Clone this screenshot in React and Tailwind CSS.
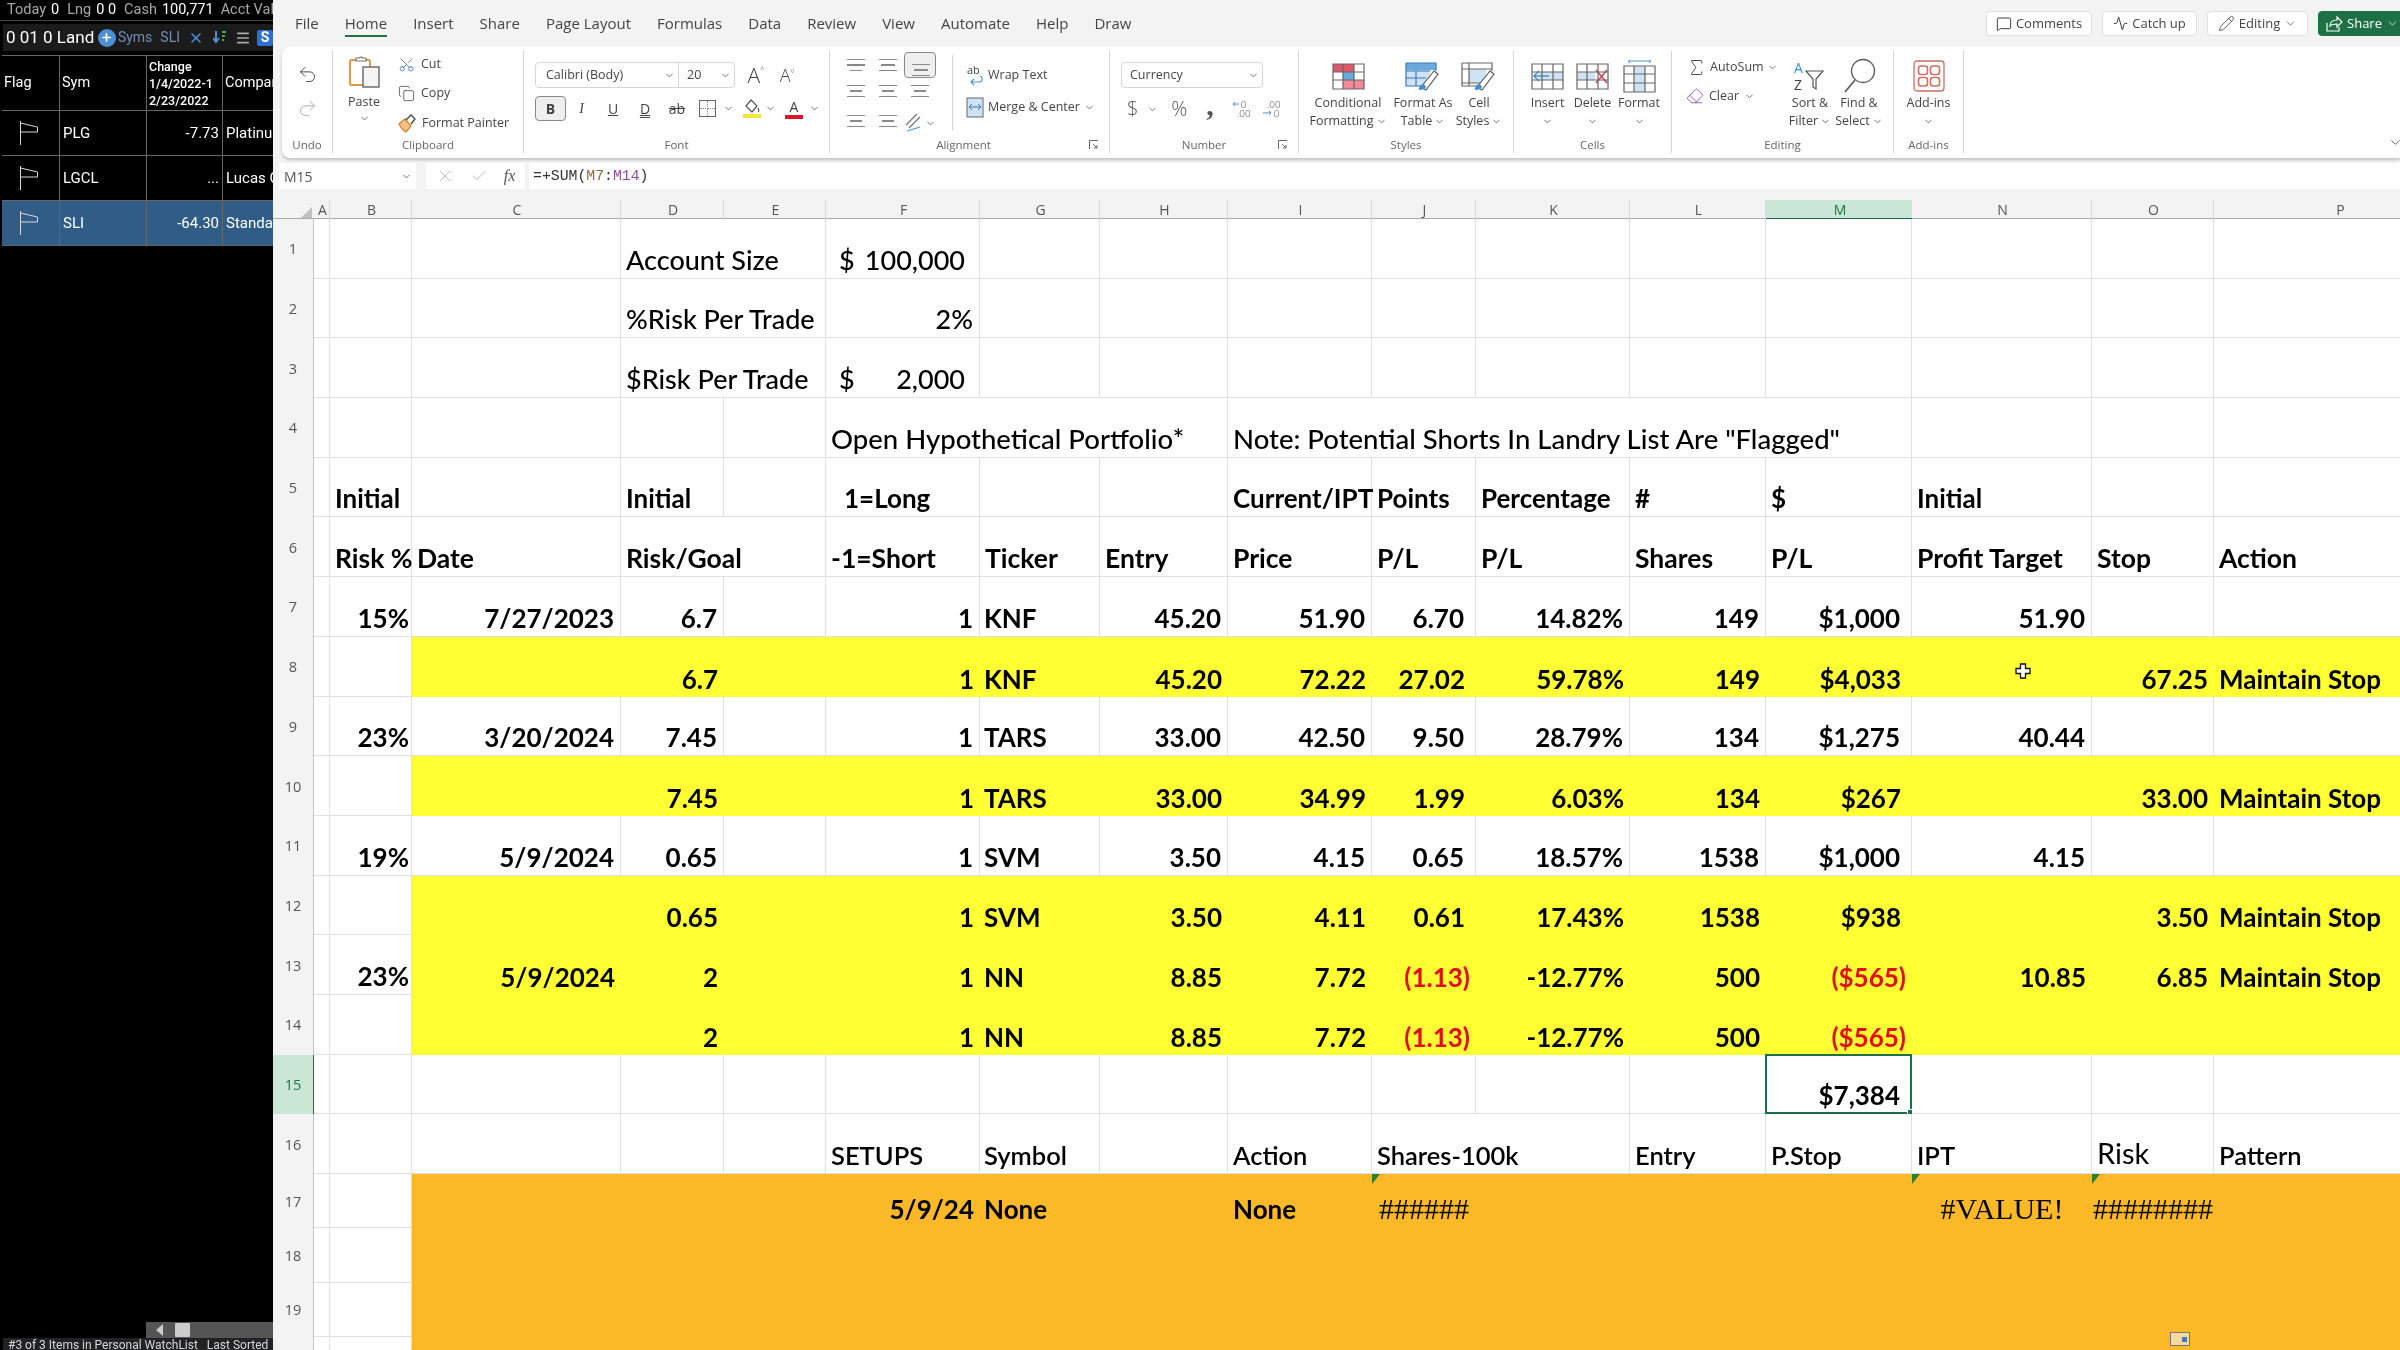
import {
  ChevronDown, Undo2, Redo2, Scissors, Copy, X, Check, MessageSquare, Activity, Pencil,
  Sigma, Eraser, Menu, Plus,
} from 'lucide-react';
import clsx from 'clsx';

const COLS = ['A', 'B', 'C', 'D', 'E', 'F', 'G', 'H', 'I', 'J', 'K', 'L', 'M', 'N', 'O', 'P'];
const SHEET_GRID = 'grid grid-cols-[41px_16px_82px_209px_103px_102px_154px_120px_128px_144px_104px_154px_136px_146px_180px_122px_252px]';
const SPANS = { 2: 'col-span-2', 3: 'col-span-3', 5: 'col-span-5' };

// r = right aligned, pad = accounting format padding
const r = (t, extra = {}) => ({ t, r: true, ...extra });
const red = (t) => ({ t, r: true, red: true });
const pad = (t) => ({ t, r: true, pad: true });
const serif = (t, extra = {}) => ({ t, serif: true, center: true, ...extra });

const tradeRow = (d, side, ticker, entry, price, pts, pct, shares, pl) => ({
  D: r(d), F: r(side), G: { t: ticker, tight: true }, H: r(entry), I: r(price), J: pts, K: r(pct), L: r(shares), M: pl,
});

const ROWS = [
  { n: 1, weight: 'font-medium text-[27px]', cells: { D: { t: 'Account Size', span: 2 }, F: { dollar: '100,000' } } },
  { n: 2, weight: 'font-medium text-[27px]', cells: { D: { t: '%Risk Per Trade', span: 2 }, F: r('2%') } },
  { n: 3, weight: 'font-medium text-[27px]', cells: { D: { t: '$Risk Per Trade', span: 2 }, F: { dollar: '2,000' } } },
  { n: 4, weight: 'font-medium text-[27.5px]', cells: { F: { t: 'Open Hypothetical Portfolio*', span: 3 }, I: { t: 'Note: Potential Shorts In Landry List Are "Flagged"', span: 5 } } },
  { n: 5, weight: 'font-bold text-[26px]', cells: { B: { t: 'Initial' }, D: { t: 'Initial' }, F: { t: '1=Long', indent: true }, I: { t: 'Current/IPT' }, J: { t: 'Points' }, K: { t: 'Percentage' }, L: { t: '#' }, M: { t: '$' }, N: { t: 'Initial' } } },
  { n: 6, weight: 'font-bold text-[26.5px]', cells: { B: { t: 'Risk %' }, C: { t: 'Date' }, D: { t: 'Risk/Goal', span: 2 }, F: { t: '-1=Short' }, G: { t: 'Ticker' }, H: { t: 'Entry' }, I: { t: 'Price' }, J: { t: 'P/L' }, K: { t: 'P/L' }, L: { t: 'Shares' }, M: { t: 'P/L' }, N: { t: 'Profit Target' }, O: { t: 'Stop' }, P: { t: 'Action' } } },
  { n: 7, cells: { B: r('15%'), C: r('7/27/2023'), ...tradeRow('6.7', '1', 'KNF', '45.20', '51.90', pad('6.70'), '14.82%', '149', pad('$1,000')), N: r('51.90') } },
  { n: 8, fill: 'yellow', cursor: true, cells: { ...tradeRow('6.7', '1', 'KNF', '45.20', '72.22', pad('27.02'), '59.78%', '149', pad('$4,033')), O: r('67.25'), P: { t: 'Maintain Stop' } } },
  { n: 9, cells: { B: r('23%'), C: r('3/20/2024'), ...tradeRow('7.45', '1', 'TARS', '33.00', '42.50', pad('9.50'), '28.79%', '134', pad('$1,275')), N: r('40.44') } },
  { n: 10, fill: 'yellow', cells: { ...tradeRow('7.45', '1', 'TARS', '33.00', '34.99', pad('1.99'), '6.03%', '134', pad('$267')), O: r('33.00'), P: { t: 'Maintain Stop' } } },
  { n: 11, cells: { B: r('19%'), C: r('5/9/2024'), ...tradeRow('0.65', '1', 'SVM', '3.50', '4.15', pad('0.65'), '18.57%', '1538', pad('$1,000')), N: r('4.15') } },
  { n: 12, fill: 'yellow', cells: { ...tradeRow('0.65', '1', 'SVM', '3.50', '4.11', pad('0.61'), '17.43%', '1538', pad('$938')), O: r('3.50'), P: { t: 'Maintain Stop' } } },
  { n: 13, fill: 'yellow', cells: { B: r('23%'), C: r('5/9/2024'), ...tradeRow('2', '1', 'NN', '8.85', '7.72', red('(1.13)'), '-12.77%', '500', red('($565)')), N: r('10.85'), O: r('6.85'), P: { t: 'Maintain Stop' } } },
  { n: 14, fill: 'yellow', cells: tradeRow('2', '1', 'NN', '8.85', '7.72', red('(1.13)'), '-12.77%', '500', red('($565)')) },
  { n: 15, active: true, cells: { M: pad('$7,384') } },
  { n: 16, weight: 'font-semibold text-[25.5px]', cells: { F: { t: 'SETUPS' }, G: { t: 'Symbol', tight: true }, I: { t: 'Action' }, J: { t: 'Shares-100k', span: 2 }, L: { t: 'Entry' }, M: { t: 'P.Stop' }, N: { t: 'IPT' }, O: { t: 'Risk', big: true }, P: { t: 'Pattern' } } },
  { n: 17, fill: 'orange', short: true, cells: { F: r('5/9/24'), G: { t: 'None', tight: true }, I: { t: 'None' }, J: serif('######', { mark: true }), N: serif('#VALUE!', { mark: true }), O: serif('########', { mark: true }) } },
  { n: 18, fill: 'orange', short: true, cells: {} },
  { n: 19, fill: 'orange', short: true, cells: {} },
  { n: 20, fill: 'orange', short: true, cells: {} },
];

const Chev = ({ className = '' }) => <ChevronDown size={11} strokeWidth={1.8} className={clsx('text-[#555]', className)} />;

function Line({ w = 18, className = '' }) {
  return <div className={clsx('h-[1.5px] bg-[#8a8a8a]', className)} style={{ width: w }} />;
}

function AlignIcon({ widths, v = 'center', label }) {
  return (
    <div aria-label={label} className={clsx('flex flex-col gap-[4px] w-[32px] h-[26px] items-center', v === 'end' ? 'justify-end pb-[3px]' : 'justify-center')}>
      {widths.map((w, i) => <Line key={i} w={w} />)}
    </div>
  );
}

const PasteIcon = () => (
  <svg width="32" height="34" viewBox="0 0 32 34" fill="none">
    <rect x="2" y="6" width="20" height="25" rx="1.5" stroke="#e09a4f" strokeWidth="2" />
    <path d="M8 6V4h3a3 3 0 0 1 4 0h3v3H8z" fill="#fff" stroke="#777" strokeWidth="1.2" />
    <rect x="15" y="13" width="16" height="20" fill="#f5f5f5" stroke="#666" strokeWidth="1.4" />
  </svg>
);

const PainterIcon = () => (
  <svg width="20" height="20" viewBox="0 0 20 20" fill="none">
    <path d="M2 11l6-5 6 7-5 6c-2-1-5-4-7-8z" fill="#f0c089" stroke="#d9822b" strokeWidth="1.3" />
    <path d="M9 7l5-5 4 4-4 5" stroke="#444" strokeWidth="1.3" />
  </svg>
);

const Grid3 = ({ children }) => (
  <svg width="33" height="27" viewBox="0 0 33 27" fill="none">
    {children}
    <path d="M1 1h31v25H1zM1 9h31M1 17h31M11 1v25M22 1v25" stroke="#666" strokeWidth="1.2" />
  </svg>
);

const CondIcon = () => (
  <Grid3>
    <rect x="1" y="1" width="21" height="8" fill="#e2566d" />
    <rect x="11" y="9" width="11" height="8" fill="#6aa9dc" />
    <rect x="11" y="17" width="21" height="9" fill="#f28a9a" />
  </Grid3>
);

const TableIcon = () => (
  <svg width="36" height="30" viewBox="0 0 36 30" fill="none">
    <rect x="1" y="2" width="30" height="7" fill="#6aa9dc" />
    <rect x="1" y="9" width="24" height="16" fill="#cfe3f5" />
    <path d="M1 2h30v8M1 2v23h20M1 10h24M1 17h20M11 10v15" stroke="#3a78b5" strokeWidth="1.2" />
    <path d="M16 26l13-16 4 3-12 16z" fill="#fff" stroke="#555" strokeWidth="1.1" />
    <path d="M14 29c0-4 2-6 5-6l2 3c-1 2-3 3-7 3z" fill="#3c8fd3" />
  </svg>
);

const CellStyleIcon = () => (
  <svg width="36" height="30" viewBox="0 0 36 30" fill="none">
    <rect x="8" y="8" width="17" height="14" fill="#cfe3f5" />
    <path d="M1 2h30v8M1 2v23h20M8 2v23M1 8h30M1 22h20" stroke="#666" strokeWidth="1.2" />
    <path d="M16 26l13-16 4 3-12 16z" fill="#fff" stroke="#555" strokeWidth="1.1" />
    <path d="M14 29c0-4 2-6 5-6l2 3c-1 2-3 3-7 3z" fill="#3c8fd3" />
  </svg>
);

const InsertIcon = () => (
  <Grid3>
    <rect x="8" y="9" width="24" height="8" fill="#cfe3f5" />
    <path d="M18 13H3M8 8l-5 5 5 5" stroke="#4a94d4" strokeWidth="1.6" />
  </Grid3>
);

const DeleteIcon = () => (
  <Grid3>
    <rect x="1" y="9" width="18" height="8" fill="#cfe3f5" />
    <path d="M20 7l11 13M31 7L20 20" stroke="#d9455f" strokeWidth="1.6" />
  </Grid3>
);

const FormatIcon = () => (
  <svg width="33" height="33" viewBox="0 0 33 33" fill="none">
    <path d="M6 1h21M6 0v3M27 0v3" stroke="#4a94d4" strokeWidth="1.2" />
    <rect x="11" y="6" width="11" height="26" fill="#cfe3f5" />
    <path d="M1 6h31v26H1zM1 14h31M1 23h31M11 6v26M22 6v26" stroke="#666" strokeWidth="1.2" />
  </svg>
);

const SortIcon = () => (
  <svg width="32" height="32" viewBox="0 0 32 32" fill="none" className="font-['Open_Sans',sans-serif]">
    <text x="0" y="13" fontSize="14" fill="#3c8fd3">A</text>
    <text x="0" y="30" fontSize="14" fill="#444">Z</text>
    <path d="M12 11h17l-7 8v10l-3-2v-8z" stroke="#555" strokeWidth="1.2" fill="#fff" />
  </svg>
);

const FindIcon = () => (
  <svg width="34" height="36" viewBox="0 0 34 36" fill="none">
    <circle cx="21" cy="13" r="11.5" stroke="#555" strokeWidth="1.3" />
    <path d="M13 22L3 34" stroke="#555" strokeWidth="1.6" />
  </svg>
);

const AddinsIcon = () => (
  <svg width="32" height="32" viewBox="0 0 32 32" fill="none" stroke="#cd6f62" strokeWidth="1.6">
    <rect x="1" y="1" width="30" height="30" rx="3" strokeWidth="1.3" />
    <rect x="5.5" y="6" width="9" height="8.5" rx="2.5" />
    <rect x="17.5" y="6" width="9" height="8.5" rx="2.5" />
    <rect x="5.5" y="17.5" width="9" height="8.5" rx="2.5" />
    <rect x="17.5" y="17.5" width="9" height="8.5" rx="2.5" />
  </svg>
);

const ShareIcon = () => (
  <svg width="18" height="18" viewBox="0 0 18 18" fill="none" stroke="#fff" strokeWidth="1.2">
    <path d="M2 8v8h12v-4" />
    <path d="M5 11c0-4 3-6 7-6V2l5 5-5 5V9c-3 0-5 0-7 2z" />
  </svg>
);

const Launcher = ({ className }) => (
  <svg width="10" height="10" viewBox="0 0 10 10" fill="none" stroke="#666" className={clsx('absolute', className)}>
    <path d="M.5 9V.5H9M4 4l4 4M8 5v3H5" />
  </svg>
);

function Group({ w, label, labelClass, children }) {
  return (
    <div className={clsx('relative flex flex-col h-[102px] border-r border-[#d4d4d4] shrink-0', w)}>
      <div className="h-[85px] flex">{children}</div>
      <div className={clsx('h-[17px] leading-[17px] text-[11.5px] text-[#666] text-center', labelClass)}>{label}</div>
    </div>
  );
}

function BigButton({ w, icon, lines, chevOnly }) {
  return (
    <div className={clsx('flex flex-col items-center shrink-0', w)}>
      <div className="h-[36px] mt-[7px] flex items-center justify-center">{icon}</div>
      <div className="text-[12.5px] leading-[18px] text-[#444] text-center whitespace-nowrap">
        {lines.map((l, i) => (
          <div key={i} className="flex items-center justify-center gap-[2px]">
            {l}{i === lines.length - 1 && !chevOnly && <Chev />}
          </div>
        ))}
        {chevOnly && <div className="flex justify-center h-[18px] items-center"><Chev /></div>}
      </div>
    </div>
  );
}

function Ribbon() {
  const tool = 'flex items-center justify-center text-[#444] h-[25px] shrink-0';
  return (
    <div className="ml-[9px] h-[111px] bg-white rounded-l-lg shadow-[0_2px_3px_rgba(0,0,0,0.2)] flex pt-[4px] text-[#444] relative">
      <Group w="w-[51px]" label="Undo">
        <div className="w-full flex flex-col items-center pt-[13px] gap-[13px]">
          <Undo2 size={21} strokeWidth={1.1} className="text-[#444]" />
          <Redo2 size={21} strokeWidth={1.1} className="text-[#aaa]" />
        </div>
      </Group>

      <Group w="w-[191px]" label="Clipboard">
        <div className="ml-[11px] w-[40px] flex flex-col items-center pt-[3px]">
          <PasteIcon />
          <div className="text-[12.5px] leading-[18px] mt-[5px]">Paste</div>
          <Chev className="mt-[2px]" />
        </div>
        <div className="ml-[14px] mt-[1px] flex flex-col gap-[5.5px] text-[12.5px]">
          <div className="h-[24px] flex items-center gap-[6px]"><Scissors size={17} strokeWidth={1.1} className="-rotate-90 text-[#3a6ea5]" />Cut</div>
          <div className="h-[24px] flex items-center gap-[6px]"><Copy size={17} strokeWidth={1.1} />Copy</div>
          <div className="h-[24px] flex items-center gap-[5px] whitespace-nowrap -ml-[1px]"><PainterIcon />Format Painter</div>
        </div>
      </Group>

      <Group w="w-[306px]" label="Font">
        <div className="ml-[11px] pt-[11px]">
          <div className="flex items-center">
            <div className="w-[200px] h-[26px] border border-[#d6d6d6] rounded-[4px] flex items-center text-[12.5px]">
              <div className="w-[143px] pl-[10px] flex items-center justify-between pr-[3px] border-r border-[#d6d6d6] h-full">Calibri (Body)<Chev /></div>
              <div className="flex-1 pl-[8px] flex items-center justify-between pr-[3px]">20<Chev /></div>
            </div>
            <div className="ml-[7px] w-[28px] flex justify-center text-[21px] leading-none font-light">A<span className="text-[8px] text-[#3a6ea5]">^</span></div>
            <div className="ml-[3px] w-[28px] flex justify-center text-[18px] leading-none font-light">A<span className="text-[8px] text-[#3a6ea5]">v</span></div>
          </div>
          <div className="flex items-center mt-[8px] text-[14px]">
            <div className="w-[31px] h-[25px] border border-[#8a8a8a] rounded-[4px] bg-[#efefef] flex items-center justify-center font-bold">B</div>
            <div className={clsx(tool, 'w-[31px] italic font-["Liberation_Serif",serif]')}>I</div>
            <div className={clsx(tool, 'w-[32px] underline')}>U</div>
            <div className={clsx(tool, 'w-[32px] underline decoration-double')}>D</div>
            <div className={clsx(tool, 'w-[32px] line-through')}>ab</div>
            <div className={clsx(tool, 'w-[29px]')}>
              <div className="w-[17px] h-[17px] border border-[#666] grid grid-cols-2 grid-rows-2">
                <div className="border-r border-b border-dotted border-[#888]" /><div className="border-b border-dotted border-[#888]" />
                <div className="border-r border-dotted border-[#888]" /><div />
              </div>
            </div>
            <div className={clsx(tool, 'w-[12px]')}><Chev /></div>
            <div className={clsx(tool, 'w-[24px] ml-[6px] flex-col')}>
              <svg width="16" height="15" viewBox="0 0 16 15" fill="none" stroke="#555" strokeWidth="1.2"><path d="M7 1l6 6-5 6-6-6z" /><path d="M14 9c1 2 1.500 3 0 4" /></svg>
              <div className="w-[18px] h-[4px] bg-[#f6e63a]" />
            </div>
            <div className={clsx(tool, 'w-[13px]')}><Chev /></div>
            <div className={clsx(tool, 'w-[24px] ml-[5px] flex-col leading-[17px]')}>
              A
              <div className="w-[18px] h-[4px] bg-[#d9182e]" />
            </div>
            <div className={clsx(tool, 'w-[12px] ml-[2px]')}><Chev /></div>
          </div>
        </div>
      </Group>

      <Group w="w-[280px]" label="Alignment" labelClass="pr-[12px]">
        <div className="ml-[10px] mt-[1px] grid grid-cols-3 grid-rows-[26px_30px_30px] w-[96px]">
          <AlignIcon widths={[18, 18, 12]} label="top" />
          <AlignIcon widths={[18, 14, 18]} label="middle" />
          <div className="border border-[#8a8a8a] rounded-[4px] bg-[#efefef]"><AlignIcon widths={[18, 14, 18]} v="end" label="bottom" /></div>
          <AlignIcon widths={[18, 12, 18]} />
          <AlignIcon widths={[18, 12, 18]} />
          <AlignIcon widths={[18, 12, 18]} />
          <AlignIcon widths={[18, 12, 18]} />
          <AlignIcon widths={[18, 12, 18]} />
          <div className="flex items-center justify-center gap-[1px]">
            <svg width="20" height="22" viewBox="0 0 20 22" fill="none" stroke="#777" strokeWidth="1.3"><path d="M2 13L13 2M5 16L16 5" /><path d="M3 19l13-4" stroke="#4a94d4" /></svg>
            <Chev />
          </div>
        </div>
        <div className="ml-[16px] mt-[4px] h-[75px] w-px bg-[#d4d4d4]" />
        <div className="ml-[13px] mt-[10px] flex flex-col text-[12.5px]">
          <div className="h-[28px] flex items-center gap-[4px]">
            <svg width="18" height="22" viewBox="0 0 18 22" fill="none"><text x="1" y="10" fontSize="11" fill="#444">ab</text><path d="M14 12c3 1 3 5 0 6H5M8 15l-3 3 3 3" stroke="#4a94d4" strokeWidth="1.2" /></svg>
            Wrap Text
          </div>
          <div className="h-[27px] mt-[5px] flex items-center gap-[4px] whitespace-nowrap">
            <svg width="18" height="21" viewBox="0 0 18 21" fill="none"><rect x="1" y="1" width="16" height="19" fill="#cfe3f5" stroke="#666" /><path d="M3 10h12M6 7l-3 3 3 3M12 7l3 3-3 3" stroke="#3a78b5" /></svg>
            Merge &amp; Center
            <Chev />
          </div>
        </div>
      </Group>

      <Group w="w-[189px]" label="Number">
        <div className="ml-[11px] pt-[11px] w-[165px]">
          <div className="w-[142px] h-[26px] border border-[#d6d6d6] rounded-[4px] flex items-center justify-between pl-[8px] pr-[3px] text-[12.5px]">Currency<Chev /></div>
          <div className="flex items-center h-[30px] mt-[6px] text-[20px] font-light text-[#555]">
            <span className="w-[24px] text-center">$</span>
            <Chev className="mx-[2px]" />
            <span className="w-[28px] ml-[6px] text-center">%</span>
            <span className="w-[28px] ml-[3px] text-center font-['Liberation_Serif',serif] font-bold text-[30px] leading-[22px] -mt-[8px]">,</span>
            <svg width="24" height="20" viewBox="0 0 24 20" className="ml-[8px]" fill="none"><text x="9" y="9" fontSize="10" fill="#444">0</text><text x="5" y="18" fontSize="10" fill="#444">.00</text><path d="M7 5H1M3 3L1 5l2 2" stroke="#4a94d4" /></svg>
            <svg width="24" height="20" viewBox="0 0 24 20" className="ml-[7px]" fill="none"><text x="5" y="9" fontSize="10" fill="#444">.00</text><text x="12" y="18" fontSize="10" fill="#444">0</text><path d="M1 14h8M7 12l2 2-2 2" stroke="#4a94d4" /></svg>
          </div>
        </div>
      </Group>

      <Group w="w-[215px]" label="Styles">
        <div className="pl-[4px] flex">
          <BigButton w="w-[90px]" icon={<CondIcon />} lines={['Conditional', 'Formatting']} />
          <BigButton w="w-[60px]" icon={<TableIcon />} lines={['Format As', 'Table']} />
          <BigButton w="w-[52px]" icon={<CellStyleIcon />} lines={['Cell', 'Styles']} />
        </div>
      </Group>

      <Group w="w-[158px]" label="Cells">
        <div className="pl-[11px] flex">
          <BigButton w="w-[45px]" icon={<InsertIcon />} lines={['Insert']} chevOnly />
          <BigButton w="w-[45px]" icon={<DeleteIcon />} lines={['Delete']} chevOnly />
          <BigButton w="w-[48px]" icon={<FormatIcon />} lines={['Format']} chevOnly />
        </div>
      </Group>

      <Group w="w-[222px]" label="Editing">
        <div className="pl-[14px] flex">
          <div className="w-[99px] shrink-0 pt-[3px] text-[12.5px]">
            <div className="h-[26px] flex items-center gap-[3px] whitespace-nowrap"><Sigma size={21} strokeWidth={1.1} />AutoSum<Chev /></div>
            <div className="h-[26px] mt-[3px] flex items-center gap-[5px]"><Eraser size={18} strokeWidth={1.2} className="text-[#9a4fb5]" />Clear<Chev /></div>
          </div>
          <BigButton w="w-[50px]" icon={<SortIcon />} lines={['Sort &', 'Filter']} />
          <BigButton w="w-[48px]" icon={<FindIcon />} lines={['Find &', 'Select']} />
        </div>
      </Group>

      <Group w="w-[70px]" label="Add-ins">
        <BigButton w="w-full" icon={<AddinsIcon />} lines={['Add-ins']} chevOnly />
      </Group>

      <ChevronDown size={15} strokeWidth={1.3} className="absolute right-[-3px] top-[88px] text-[#444]" />
      <Launcher className="left-[807px] top-[93px]" />
      <Launcher className="left-[996px] top-[93px]" />
    </div>
  );
}

function TopBar() {
  const tabs = ['File', 'Home', 'Insert', 'Share', 'Page Layout', 'Formulas', 'Data', 'Review', 'View', 'Automate', 'Help', 'Draw'];
  const btn = 'h-[25px] bg-white border border-[#e0e0e0] rounded-[4px] flex items-center justify-center gap-[4px] text-[13px] text-[#444]';
  return (
    <div className="h-[47px] flex items-start shrink-0">
      <div className="flex gap-[26px] pl-[22px] text-[15px] text-[#444] h-[37px] items-center pt-[9px]">
        {tabs.map((t) => (
          <div key={t} className="relative whitespace-nowrap">
            {t}
            {t === 'Home' && <div className="absolute left-0 right-0 top-[23px] h-[2px] bg-[#1e7145]" />}
          </div>
        ))}
      </div>
      <div className="ml-auto flex gap-[10px] pt-[11px] -mr-[6px]">
        <div className={clsx(btn, 'w-[106px]')}><MessageSquare size={16} strokeWidth={1.3} className="text-[#222]" />Comments</div>
        <div className={clsx(btn, 'w-[95px]')}><Activity size={15} strokeWidth={1.4} className="text-[#222]" />Catch up</div>
        <div className={clsx(btn, 'w-[101px]')}><Pencil size={17} strokeWidth={1.2} />Editing<ChevronDown size={13} strokeWidth={1.3} /></div>
        <div className={clsx(btn, 'w-[88px] !bg-[#1e7145] !border-[#1e7145] !text-white')}><ShareIcon />Share<ChevronDown size={13} strokeWidth={1.3} /></div>
      </div>
    </div>
  );
}

function FormulaBar() {
  return (
    <div className="mt-[5px] ml-[6px] h-[26px] flex shrink-0 text-[#555]">
      <div className="w-[137px] bg-white flex items-center justify-between pl-[5px] pr-[4px] text-[14px]">M15<Chev /></div>
      <div className="ml-[10px] w-[99px] bg-white flex items-center justify-center gap-[16px]">
        <X size={18} strokeWidth={1} className="text-[#aaa]" />
        <Check size={18} strokeWidth={1} className="text-[#aaa]" />
        <span className="italic text-[16px] font-['Liberation_Serif',serif]">fx</span>
      </div>
      <div className="ml-[4px] flex-1 bg-white flex items-center pl-[4px] text-[14.8px] font-['Liberation_Mono',monospace] text-[#333]">
        =+SUM(<span className="text-[#8a6a3a]">M7</span>:<span className="text-[#8a4f9a]">M14</span>)
      </div>
    </div>
  );
}

function ColumnHeaders() {
  return (
    <div className={clsx(SHEET_GRID, 'h-[19px] mt-[11px] shrink-0 text-[14px] text-[#555] leading-[19px] border-b border-[#ababab]')}>
      <div className="flex justify-end items-end pr-[2px] pb-[2px]">
        <div className="w-0 h-0 border-l-[11px] border-l-transparent border-b-[11px] border-b-[#c0c0c0]" />
      </div>
      {COLS.map((c) => (
        <div key={c} className={clsx('text-center pl-[2px]', c === 'M' ? 'bg-[#c9e6d6] text-[#1e7145] border-b-2 border-[#1e7145] h-[20px]' : 'border-r border-[#d8d8d8]')}>{c}</div>
      ))}
    </div>
  );
}

function Cell({ col, cell, row }) {
  const filled = row.fill && col !== 'A' && col !== 'B';
  const fillClass = filled && (row.fill === 'yellow' ? 'bg-[#ffff33]' : 'bg-[#fbb927]');
  return (
    <div
      className={clsx(
        'relative flex items-end whitespace-nowrap min-w-0',
        row.short ? 'pb-[1px]' : 'pb-0',
        fillClass,
        !filled && 'border-r border-b border-[#e0e0e0]',
        cell && cell.span && SPANS[cell.span],
        cell && cell.r && 'justify-end',
        cell && cell.r && (cell.pad ? 'pr-[11px]' : col === 'B' ? 'pr-[2px]' : 'pr-[6px]'),
        cell && cell.center && 'justify-center',
        cell && !cell.r && !cell.center && !cell.dollar && (cell.indent ? 'pl-[18px]' : cell.tight ? 'pl-[4px]' : 'pl-[5px]'),
        cell && cell.dollar && 'justify-between pl-[13px] pr-[14px]',
        cell && cell.red && 'text-[#e01010]',
        cell && cell.serif && "font-['Liberation_Serif',serif] font-normal text-[30px]",
        cell && cell.big && 'font-normal text-[29px] leading-[40px]',
      )}
    >
      {cell && cell.dollar ? (<><span>$</span><span>{cell.dollar}</span></>) : cell && cell.t}
      {cell && cell.mark && <div className="absolute left-0 top-0 w-0 h-0 border-t-[10px] border-t-[#2e7d32] border-r-[8px] border-r-transparent" />}
      {row.active && col === 'M' && (
        <div className="absolute -inset-px border-2 border-[#1e7145]">
          <div className="absolute -right-[3px] -bottom-[3px] w-[6px] h-[6px] bg-[#1e7145] border border-white" />
        </div>
      )}
      {row.cursor && col === 'N' && (
        <svg width="16" height="16" viewBox="0 0 16 16" className="absolute left-[103px] top-[26px]">
          <path d="M5.500 1h5v4.500H15v5h-4.500V15h-5v-4.500H1v-5h4.500z" fill="#fff" stroke="#111" strokeWidth="1.300" />
        </svg>
      )}
    </div>
  );
}

function SheetRow({ row }) {
  const out = [];
  for (let i = 0; i < COLS.length; i++) {
    const col = COLS[i];
    const cell = row.cells[col];
    out.push(<Cell key={col} col={col} cell={cell} row={row} />);
    if (cell && cell.span) i += cell.span - 1;
  }
  return (
    <div className={clsx(SHEET_GRID, row.short ? 'h-[54.4px]' : 'h-[59.7px]', 'shrink-0 text-black', row.weight || 'font-bold')}>
      <div className={clsx(
        'flex items-center justify-center border-r text-[14.5px] font-normal font-["Open_Sans",sans-serif] pt-[1px]',
        row.active ? 'bg-[#c9e6d6] text-[#1e7145] border-[#1e7145]' : 'bg-[#f3f3f3] text-[#555] border-[#c4c4c4]',
      )}>{row.n}</div>
      {out}
    </div>
  );
}

const FlagGlyph = () => (
  <svg width="20" height="26" viewBox="0 0 20 26" fill="none" stroke="#d8d8d8" strokeWidth="1">
    <path d="M1.500 1v24M1.500 3l17 4v5h-17" />
  </svg>
);

function WatchList() {
  const rows = [
    { sym: 'PLG', chg: '-7.73', co: 'Platinum' },
    { sym: 'LGCL', chg: '...', co: 'Lucas GC' },
    { sym: 'SLI', chg: '-64.30', co: 'Standard', sel: true },
  ];
  const grid = 'grid grid-cols-[58px_87px_76px_52px]';
  const c = 'border-r border-[#666] flex items-center overflow-hidden whitespace-nowrap';
  return (
    <div className="w-[273px] shrink-0 h-full bg-black text-white flex flex-col overflow-hidden font-['Roboto',sans-serif]">
      <div className="h-[21px] flex items-center gap-[5px] pl-[7px] text-[14.5px] whitespace-nowrap border-b border-[#444] shrink-0">
        <span className="text-[#a8a8a8]">Today</span><span>0</span>
        <span className="text-[#a8a8a8] ml-[3px]">Lng</span><span>0 0</span>
        <span className="text-[#a8a8a8] ml-[3px]">Cash</span><span>100,771</span>
        <span className="text-[#a8a8a8] ml-[2px]">Acct Val</span>
      </div>
      <div className="h-[27px] mt-[3px] ml-[3px] bg-[#1b1b1b] flex items-center pl-[3px] text-[#4d8fd6] whitespace-nowrap overflow-hidden shrink-0">
        <span className="text-white text-[17px] w-[98px] overflow-hidden">0 01 0 Landr</span>
        <span className="w-[18px] h-[18px] rounded-full bg-[#4d8fd6] flex items-center justify-center ml-[3px] shrink-0"><Plus size={13} strokeWidth={3} className="text-white" /></span>
        <span className="ml-[2px] text-[14px] text-[#6f8fb5]">Syms</span>
        <span className="ml-[8px] text-[14px] text-[#6f8fb5]">SLI</span>
        <X size={16} strokeWidth={2.4} className="ml-[8px] shrink-0" />
        <svg width="14" height="16" viewBox="0 0 14 16" className="ml-[9px] shrink-0"><path d="M3 1v10M0 8l3 4 3-4" fill="none" stroke="#4d8fd6" strokeWidth="2" /><path d="M9 2h4M9 6h3M9 10h2" stroke="#3fae5a" strokeWidth="2" /></svg>
        <Menu size={16} strokeWidth={2.4} className="ml-[8px] text-[#aaa] shrink-0" />
        <span className="ml-[6px] w-[16px] h-[16px] bg-[#2f6fd0] text-white text-[14px] font-bold flex items-center justify-center rounded-[2px] shrink-0">S</span>
      </div>
      <div className="ml-[2px] mt-[4px] border-t border-[#666] shrink-0">
        <div className={clsx(grid, 'h-[55px] border-b border-[#666] text-[14.5px]')}>
          <div className={clsx(c, 'pl-[2px]')}>Flag</div>
          <div className={clsx(c, 'pl-[2px]')}>Sym</div>
          <div className={clsx(c, 'pl-[2px] text-[12.5px] leading-[17px] font-medium')}>Change<br />1/4/2022-1<br />2/23/2022</div>
          <div className="flex items-center pl-[2px] overflow-hidden whitespace-nowrap">Company</div>
        </div>
        {rows.map((row) => (
          <div key={row.sym} className={clsx(grid, 'h-[45px] border-b border-[#666] text-[15px]', row.sel && 'bg-[#2f5d85]')}>
            <div className={clsx(c, 'justify-center pr-[3px]')}><FlagGlyph /></div>
            <div className={clsx(c, 'pl-[3px]')}>{row.sym}</div>
            <div className={clsx(c, 'justify-end pr-[3px]')}>{row.chg}</div>
            <div className="flex items-center pl-[3px] overflow-hidden whitespace-nowrap">{row.co}</div>
          </div>
        ))}
      </div>
      <div className="flex-1" />
      <div className="h-[16px] ml-[146px] bg-[#555] flex items-center pl-[10px] gap-[12px] shrink-0">
        <div className="w-0 h-0 border-y-[6px] border-y-transparent border-r-[7px] border-r-[#ccc]" />
        <div className="w-[15px] h-[14px] bg-[#ccc] rounded-[1px]" />
      </div>
      <div className="h-[12px] ml-[3px] bg-[#222] text-[#cfd8e0] text-[12px] leading-[14px] pl-[5px] whitespace-nowrap overflow-hidden shrink-0">#3 of 3 Items in Personal WatchList&nbsp;&nbsp; Last Sorted</div>
    </div>
  );
}

export default function App() {
  return (
    <div className="w-[2400px] h-[1350px] flex overflow-hidden bg-[#f3f3f3] blur-[0.4px]">
      <WatchList />
      <div className="flex-1 min-w-0 flex flex-col font-['Open_Sans',sans-serif] relative overflow-hidden">
        <TopBar />
        <Ribbon />
        <FormulaBar />
        <ColumnHeaders />
        <div className="flex-1 overflow-hidden bg-white font-['Lato',sans-serif] text-[26px] leading-[36px]">
          {ROWS.map((row) => <SheetRow key={row.n} row={row} />)}
        </div>
        <div className="absolute right-[210px] bottom-[4px] w-[20px] h-[14px] bg-[#f4d9a0] border border-[#777] flex justify-end items-center pr-[2px]">
          <div className="w-[5px] h-[5px] bg-[#4a78b5]" />
        </div>
      </div>
    </div>
  );
}
